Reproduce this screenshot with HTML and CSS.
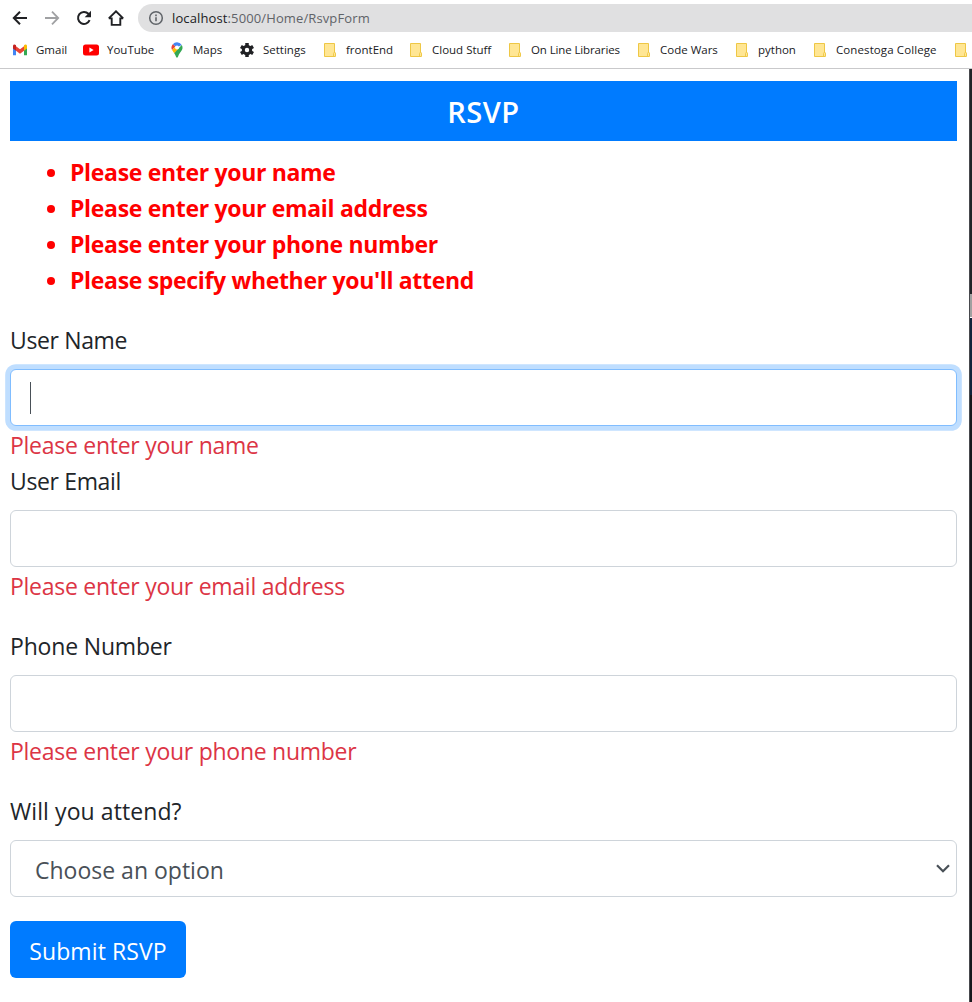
FILE: index.html
```html
<!DOCTYPE html>
<html lang="en">
<head>
<meta charset="utf-8">
<title>RsvpForm</title>
<link rel="stylesheet" href="styles.css">
</head>
<body>
<svg class="defs" width="0" height="0" aria-hidden="true">
  <symbol id="folder" viewBox="0 0 16 16">
    <path d="M2.5 1.5h10v9.5h.9v3.5H2.5z" fill="#ffe694" stroke="#eec745"/>
    <path d="M11.5 14v-2.5q0-1 1-1t1 1V14" fill="#ffe694" stroke="#eec745" stroke-width=".9"/>
  </symbol>
</svg>
<header class="browser">
  <div class="toolbar">
    <svg class="nav" viewBox="0 0 16 16"><path d="M15 8H2M8 1.7 1.8 8 8 14.3" fill="none" stroke="#202124" stroke-width="2"/></svg>
    <svg class="nav" viewBox="0 0 16 16"><path d="M1 8h13M8 1.7 14.2 8 8 14.3" fill="none" stroke="#a0a1a3" stroke-width="1.8"/></svg>
    <svg class="nav" viewBox="0 0 16 16"><path d="M13.6 10.2A6 6 0 1 1 12.4 3.8L14 5.4" fill="none" stroke="#202124" stroke-width="2"/><path d="M15 .8v6.4H8.7z" fill="#202124"/></svg>
    <svg class="nav" viewBox="0 0 16 16"><path d="M3.7 7.5v7.4h8.6V7.5M.8 8.4 8 1.3l7.2 7.1M.8 8.4h3.1m8.2 0h3.1" fill="none" stroke="#202124" stroke-width="1.9"/></svg>
    <div class="address">
      <svg class="info" viewBox="0 0 16 16"><circle cx="8" cy="8" r="6.3" fill="none" stroke="#5f6368" stroke-width="1.5"/><path d="M8 7.2v4.1M8 4.6v1.6" stroke="#5f6368" stroke-width="1.6"/></svg>
      <span class="url"><span class="host">localhost</span>:5000/Home/RsvpForm</span>
    </div>
  </div>
  <nav class="bookmarks">
    <a class="bookmark"><svg viewBox="0 0 16 16"><path d="M1 3.2v10.1h3V7.5z" fill="#4285f4"/><path d="M15 3.2v10.1h-3V7.5z" fill="#34a853"/><path d="M4 4.3v4.4l4 3 4-3V4.3l-4 3z" fill="#ea4335"/><path d="M1 4.2c0-1.8 1.8-2 3-.9v5.4L1 6.4z" fill="#c5221f"/><path d="M15 4.2c0-1.8-1.8-2-3-.9v5.4l3-2.3z" fill="#fbbc04"/></svg><span>Gmail</span></a>
    <a class="bookmark"><svg viewBox="0 0 16 16"><rect x="0" y="2.5" width="16" height="11" rx="2.5" fill="#f00"/><path d="M6.4 5.6v4.8L10.6 8z" fill="#fff"/></svg><span>YouTube</span></a>
    <a class="bookmark"><svg viewBox="0 0 16 16"><path d="M8 .2a5.4 5.4 0 0 0-4.2 2L6.4 4.5 8 5.6l4.7-2.7A5.4 5.4 0 0 0 8 .2z" fill="#4285f4"/><path d="M3.8 2.2a5.3 5.3 0 0 0-.7 5.9l3.3-3.7z" fill="#ea4335"/><path d="M3.1 8.1c.5 1 1.3 2 2.1 3.1L9.6 7 6.2 5z" fill="#fbbc04"/><path d="M12.7 2.9a5.3 5.3 0 0 1 .2 5.2c-1.1 2.2-3 3.6-3.7 6.2-.4 1.8-2 1.8-2.4 0-.3-1.2-.9-2.1-1.6-3.1z" fill="#34a853"/><circle cx="8" cy="5.6" r="2" fill="#fff"/></svg><span>Maps</span></a>
    <a class="bookmark"><svg viewBox="0 0 16 16"><circle cx="8" cy="8" r="3.7" fill="none" stroke="#202124" stroke-width="3"/><path d="M8 1v3M8 12v3M1.9 4.5l2.6 1.5M11.5 10l2.6 1.5M1.9 11.5 4.5 10M11.5 6l2.6-1.5" stroke="#202124" stroke-width="3.5"/></svg><span>Settings</span></a>
    <a class="bookmark"><svg><use href="#folder"/></svg><span>frontEnd</span></a>
    <a class="bookmark"><svg><use href="#folder"/></svg><span>Cloud Stuff</span></a>
    <a class="bookmark"><svg><use href="#folder"/></svg><span class="snug">On Line Libraries</span></a>
    <a class="bookmark"><svg><use href="#folder"/></svg><span>Code Wars</span></a>
    <a class="bookmark"><svg><use href="#folder"/></svg><span>python</span></a>
    <a class="bookmark"><svg><use href="#folder"/></svg><span class="airy">Conestoga College</span></a>
    <a class="bookmark"><svg><use href="#folder"/></svg></a>
  </nav>
</header>
<div class="viewport">
  <main class="page">
    <h4 class="title"><span>RSVP</span></h4>
    <ul class="summary">
      <li>Please enter your name</li>
      <li>Please enter your email address</li>
      <li>Please enter your phone number</li>
      <li>Please specify whether you'll attend</li>
    </ul>
    <form class="form">
      <div class="group tight">
        <label class="label">User Name</label>
        <div class="control focused"><span class="caret"></span></div>
        <div class="error">Please enter your name</div>
      </div>
      <div class="group">
        <label class="label">User Email</label>
        <div class="control"></div>
        <div class="error">Please enter your email address</div>
      </div>
      <div class="group">
        <label class="label phone">Phone Number</label>
        <div class="control"></div>
        <div class="error">Please enter your phone number</div>
      </div>
      <div class="group">
        <label class="label attend">Will you attend?</label>
        <div class="control select"><span class="choice">Choose an option</span><svg class="chevron" viewBox="0 0 14 9"><path d="M1 1.2 7 7.2l6-6" fill="none" stroke="#495057" stroke-width="2.2"/></svg></div>
      </div>
      <button class="submit" type="button">Submit RSVP</button>
    </form>
  </main>
  <aside class="edge"><div class="dark top"></div><div class="thumb"></div><div class="dark navy"></div><div class="dark rest"></div></aside>
</div>
</body>
</html>
```
FILE: styles.css
```css
* { box-sizing: border-box; }
body {
  margin: 0;
  width: 972px;
  height: 1002px;
  overflow: hidden;
  background: #fff;
  color: #212529;
  font-family: "Open Sans", "Noto Sans", sans-serif;
}
.defs { position: absolute; }
.browser { height: 69px; border-bottom: 1px solid #c9c9cb; overflow: hidden; }
.toolbar { display: flex; align-items: center; height: 28px; margin-top: 4px; padding-left: 12px; gap: 16px; }
.nav { width: 16px; height: 16px; flex: none; }
.address {
  display: flex; align-items: center; flex: 1; height: 28px; margin-left: -2px; padding-left: 10px; gap: 8px;
  background: #e0e0e1; border-radius: 14px 0 0 14px; color: #5f6368; font-size: 13px; letter-spacing: .12px;
}
.info { width: 16px; height: 16px; }
.host { color: #202124; }
.bookmarks {
  display: grid;
  grid-template-columns: 71px 86px 70px 83px 86px 99px 129px 98px 78px 141px 30px;
  padding: 10px 0 0 12px;
  font-size: 11.5px;
  line-height: 16px;
  color: #202124;
}
.bookmark { display: flex; gap: 8px; white-space: nowrap; }
.bookmark svg { width: 16px; height: 16px; flex: none; }
.snug { letter-spacing: -.12px; }
.airy { letter-spacing: .1px; }
.viewport { display: flex; height: 933px; }
.page { flex: 1; padding: 12px 12px 0 10px; font-size: 23px; line-height: 36px; }
.title {
  height: 60px; margin: 0 0 12px; padding: 13px 0; background: #007bff; color: #fff;
  text-align: center; font-size: 29px; line-height: 36px; font-weight: 600; letter-spacing: .5px;
}
.summary { margin: 0 0 24px; padding: 1px 0 0 60px; height: 144px; color: #f00; font-weight: 700; letter-spacing: -.32px; }
.group { margin-bottom: 24px; }
.tight { margin-bottom: 0; }
.label { display: block; height: 48px; padding-top: 1px; letter-spacing: -.36px; }
.phone { letter-spacing: -.17px; }
.attend { letter-spacing: .08px; }
.control { display: flex; align-items: center; height: 57px; border: 1px solid #ced4da; border-radius: 6px; background: #fff; }
.focused { border-color: #80bdff; box-shadow: 0 0 0 4.8px #bfdeff; }
.caret { width: 1px; height: 32px; margin-left: 19px; background: #495057; }
.error { height: 36px; padding-top: 1px; color: #dc3545; letter-spacing: -.27px; }
.select { justify-content: space-between; padding: 3px 6px 0 24px; color: #495057; }
.chevron { width: 14px; height: 9px; margin-bottom: 3px; }
.submit {
  display: block; width: 176px; height: 57px; padding: 3px 0 0; border: 0; border-radius: 6px;
  background: #007bff; color: #fff; font: inherit; letter-spacing: .08px;
}
.edge { display: flex; flex-direction: column; width: 3px; border-left: 1px solid #47494d; }
.dark { background: #222428; }
.top { height: 225px; }
.thumb { height: 24px; background: #a0a0a0; border-bottom: 1px solid #fff; }
.navy { height: 77px; background: #10243c; }
.rest { flex: 1; background: #17181b; }
```
